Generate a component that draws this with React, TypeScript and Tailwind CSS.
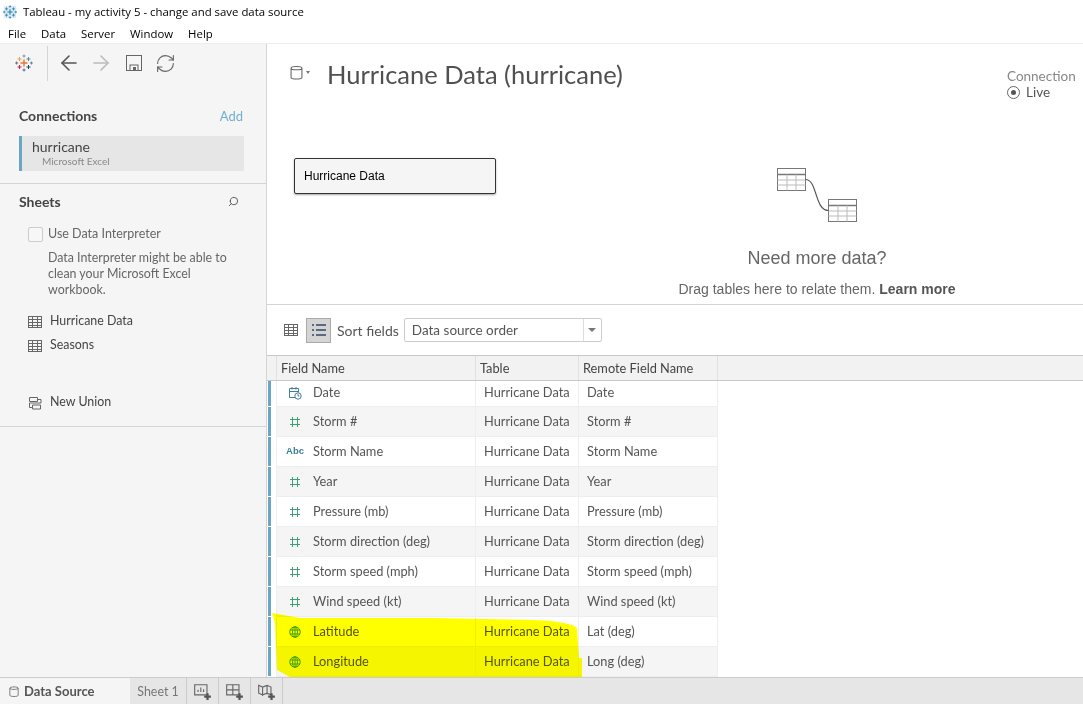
import { ArrowLeft, ArrowRight, RefreshCw, Search } from "lucide-react";

const font = "font-['Lato','Open_Sans',sans-serif]";

type FieldType = "date" | "num" | "abc" | "geo";

const fields: { name: string; remote: string; type: FieldType }[] = [
  { name: "Date", remote: "Date", type: "date" },
  { name: "Storm #", remote: "Storm #", type: "num" },
  { name: "Storm Name", remote: "Storm Name", type: "abc" },
  { name: "Year", remote: "Year", type: "num" },
  { name: "Pressure (mb)", remote: "Pressure (mb)", type: "num" },
  { name: "Storm direction (deg)", remote: "Storm direction (deg)", type: "num" },
  { name: "Storm speed (mph)", remote: "Storm speed (mph)", type: "num" },
  { name: "Wind speed (kt)", remote: "Wind speed (kt)", type: "num" },
  { name: "Latitude", remote: "Lat (deg)", type: "geo" },
  { name: "Longitude", remote: "Long (deg)", type: "geo" },
];

function TableLogo({ size = 14 }: { size?: number }) {
  return (
    <svg width={size} height={size} viewBox="0 0 14 14" fill="none" stroke="#666" strokeWidth="1">
      <rect x="0.5" y="1.5" width="13" height="11" />
      <path d="M0.5 4.5h13M0.5 7.5h13M0.5 10.5h13M4.5 1.5v11M9.5 1.5v11" />
    </svg>
  );
}

function Cross({ x, y, r, color, w = 1 }: { x: number; y: number; r: number; color: string; w?: number }) {
  return <path d={`M${x - r} ${y}h${r * 2}M${x} ${y - r}v${r * 2}`} stroke={color} strokeWidth={w} fill="none" />;
}

function TableauMark({ size, mono }: { size: number; mono?: boolean }) {
  const c = (v: string) => (mono ? "#2f7fa8" : v);
  return (
    <svg width={size} height={size} viewBox="0 0 18 18">
      {mono && <rect x="1" y="1" width="16" height="16" fill="#d9ecf5" />}
      <Cross x={9} y={9} r={3.5} color={c("#e8762b")} w={1.4} />
      <Cross x={4.5} y={5} r={2} color={c("#e8a33d")} />
      <Cross x={13.5} y={5} r={2} color={c("#5b879b")} />
      <Cross x={4.5} y={13} r={2} color={c("#c72037")} />
      <Cross x={13.5} y={13} r={2} color={c("#1f447b")} />
      <Cross x={9} y={2} r={1.5} color={c("#7099a6")} />
      <Cross x={9} y={16} r={1.5} color={c("#5c6692")} />
      <Cross x={1.6} y={9} r={1.5} color={c("#7b5f8e")} />
      <Cross x={16.4} y={9} r={1.5} color={c("#59879b")} />
    </svg>
  );
}

function Cylinder({ w, h }: { w: number; h: number }) {
  return (
    <svg width={w} height={h} viewBox="0 0 12 15" fill="none" stroke="#666" strokeWidth="1">
      <path d="M1 3.5C1 1.5 11 1.5 11 3.5V12C11 14 1 14 1 12ZM1 3.5C1 5.5 11 5.5 11 3.5" />
    </svg>
  );
}

function FieldIcon({ type }: { type: FieldType }) {
  if (type === "num")
    return (
      <svg width="12" height="12" viewBox="0 0 12 12" stroke="#3f9e78" strokeWidth="1" fill="none">
        <path d="M3.5 1v10M8.5 1v10M1 3.5h10M1 8.5h10" />
      </svg>
    );
  if (type === "abc") return <span className="text-[9.5px] font-bold text-[#3f7f9c] font-['Liberation_Sans',sans-serif]">Abc</span>;
  if (type === "geo")
    return (
      <svg width="12" height="12" viewBox="0 0 12 12" stroke="#43a01e" strokeWidth="1" fill="none">
        <circle cx="6" cy="6" r="5.2" />
        <ellipse cx="6" cy="6" rx="2.4" ry="5.2" />
        <path d="M0.8 4h10.4M0.8 8h10.4M6 0.8v10.4" />
      </svg>
    );
  return (
    <svg width="14" height="14" viewBox="0 0 14 14" stroke="#3f7f9c" strokeWidth="1" fill="none">
      <path d="M7 11.5H1.5V2.5h9v4M1.5 5.5h9M4 1v2.5M8 1v2.5" />
      <circle cx="10" cy="10" r="3.2" />
      <path d="M10 8.2V10h1.4" />
    </svg>
  );
}

function Sidebar() {
  return (
    <aside className="w-[267px] shrink-0 bg-[#f5f5f5] border-r border-[#d4d4d4] flex flex-col">
      <div className="flex items-center h-[38px] pl-[15px] text-[#666]">
        <TableauMark size={18} />
        <div className="w-px h-[35px] bg-[#d4d4d4] ml-[14px] mr-[9px]" />
        <ArrowLeft size={24} strokeWidth={1.6} color="#555" />
        <ArrowRight size={24} strokeWidth={1.6} color="#bbb" className="ml-[8px]" />
        <svg width="16" height="16" viewBox="0 0 16 16" fill="none" stroke="#666" className="ml-[13px]">
          <rect x="0.5" y="0.5" width="15" height="15" />
          <rect x="4" y="10" width="8" height="5.5" />
          <rect x="7" y="12" width="3" height="3.5" fill="#666" stroke="none" />
        </svg>
        <RefreshCw size={21} strokeWidth={1.3} color="#666" className="ml-[13px]" />
      </div>

      <div className="flex justify-between items-center pl-[19px] pr-[23px] mt-[24px] h-[18px]">
        <span className="text-[14px] font-bold text-[#444]">Connections</span>
        <span className="pt-[4px] text-[13px] text-[#6fb0cf]">Add</span>
      </div>
      <div className="ml-[19px] mr-[22px] mt-[12px] h-[35px] bg-[#e6e6e6] border-l-[3px] border-[#6ba5c4] pl-[10px] pt-[2px]">
        <div className="text-[14px] leading-[17px] text-[#444]">hurricane</div>
        <div className="text-[10px] leading-[12px] text-[#888] pl-[10px]">Microsoft Excel</div>
      </div>

      <div className="mt-[12px] border-t border-[#d4d4d4] pl-[19px] pr-[27px]">
        <div className="flex justify-between items-center mt-[8px] h-[18px]">
          <span className="text-[14px] font-bold text-[#444]">Sheets</span>
          <Search size={11} color="#555" className="-scale-x-100" />
        </div>
        <div className="flex items-center mt-[15px] ml-[9px] gap-[5px]">
          <span className="w-[15px] h-[15px] rounded-[2px] border border-[#ccc] bg-[#f7f7f7]" />
          <span className="text-[12.5px] text-[#666]">Use Data Interpreter</span>
        </div>
        <p className="ml-[29px] mt-[6px] text-[12.4px] leading-[16px] text-[#666]">
          Data Interpreter might be able to clean your Microsoft Excel workbook.
        </p>
        <div className="ml-[9px] mt-[12px] flex items-center gap-[8px] h-[24px] text-[12.4px] text-[#444]">
          <TableLogo />
          Hurricane Data
        </div>
        <div className="ml-[9px] flex items-center gap-[8px] h-[24px] text-[12.4px] text-[#444]">
          <TableLogo />
          Seasons
        </div>
        <div className="ml-[9px] mt-[33px] flex items-center gap-[8px] h-[24px] text-[12.4px] text-[#444]">
          <svg width="14" height="14" viewBox="0 0 14 14" fill="none" stroke="#666">
            <path d="M1.5 1.5h8v4h-8zM4.5 9h8v4h-8zM9.5 3.5H13V7H1.5v2M1.5 9v2.5H4.5" />
          </svg>
          New Union
        </div>
      </div>
      <div className="mt-[11px] border-t border-[#d4d4d4]" />
    </aside>
  );
}

function Canvas() {
  return (
    <section className="h-[261px] flex border-b border-[#d4d4d4] shrink-0">
      <div className="w-[394px] shrink-0">
        <div className="flex items-center pl-[23px] mt-[14px] h-[32px]">
          <span className="mb-[3px] flex items-center">
            <Cylinder w={13} h={17} />
            <span className="w-0 h-0 ml-[3px] border-x-[2.5px] border-x-transparent border-t-[3px] border-t-[#777]" />
          </span>
          <h1 className="ml-[17px] text-[25.5px] leading-[32px] text-[#505050]">Hurricane Data (hurricane)</h1>
        </div>
        <div className="ml-[27px] mt-[68px] w-[202px] h-[36px] bg-[#f5f5f5] border border-[#333] rounded-[2px] shadow-[0_1px_2px_rgba(0,0,0,0.35)] flex items-center pl-[9px] text-[12px] text-black font-['Liberation_Sans',sans-serif]">
          Hurricane Data
        </div>
      </div>

      <div className="w-[312px] shrink-0 flex flex-col items-center pt-[124px] font-['Liberation_Sans',sans-serif]">
        <svg width="82" height="56" viewBox="0 0 82 56" fill="none" stroke="#777" className="ml-[2px]">
          <rect x="0.5" y="0.5" width="28" height="22" fill="#fff" />
          <path d="M0.5 6.5h28" strokeWidth="1.5" />
          <path d="M0.5 12h28M0.5 17h28M10 6.5v16M19 6.5v16" stroke="#bbb" />
          <rect x="51.5" y="31.5" width="28" height="22" fill="#fff" />
          <path d="M51.5 37.5h28" strokeWidth="1.5" />
          <path d="M51.5 43h28M51.5 48h28M61 37.5v16M70 37.5v16" stroke="#bbb" />
          <path d="M28.5 11.5c12 0 9 31 23 31" stroke="#555" strokeWidth="1.2" />
        </svg>
        <div className="mt-[23px] text-[18px] leading-[22px] text-[#666]">Need more data?</div>
        <div className="mt-[11px] text-[14px] leading-[18px] text-[#666] whitespace-nowrap">
          Drag tables here to relate them. <b className="text-[#555]">Learn more</b>
        </div>
      </div>

      <div className="pl-[34px] pt-[24px]">
        <div className="text-[13.5px] leading-[16px] text-[#888]">Connection</div>
        <div className="flex items-center gap-[6px] text-[13.5px] leading-[17px] text-[#555]">
          <span className="w-[13px] h-[13px] rounded-full border border-[#666] flex items-center justify-center">
            <span className="w-[5px] h-[5px] rounded-full bg-[#555]" />
          </span>
          Live
        </div>
      </div>
    </section>
  );
}

function FieldTable() {
  return (
    <div className="relative flex-1 min-h-0 overflow-hidden border-t border-[#c8c8c8] bg-white text-[12.8px]">
      <div className="flex h-[25px] bg-[#f2f2f2] border-b border-[#c8c8c8] text-[#444]">
        <div className="w-[10px] border-r border-[#e0e0e0]" />
        <div className="w-[199px] border-r border-[#e0e0e0] pl-[4px] leading-[25px]">Field Name</div>
        <div className="w-[103px] border-r border-[#e0e0e0] pl-[4px] leading-[25px]">Table</div>
        <div className="w-[139px] border-r border-[#e0e0e0] pl-[4px] leading-[25px]">Remote Field Name</div>
      </div>
      {fields.map((f, i) => {
        // the first row is scrolled partly under the header
        const pad = i === 0 ? "pb-[2px]" : "";
        return (
          <div key={f.name} className={`w-[451px] flex text-[#555] ${i === 0 ? "h-[26px]" : "h-[30px]"} ${i % 2 ? "bg-[#f5f5f5]" : "bg-white"}`}>
            <div className="w-[10px] border-r border-[#eee] pb-px bg-white">
              <div className="ml-px w-[3px] h-full bg-[#6ba5c4]" />
            </div>
            <div className={`w-[199px] border-r border-b border-[#eee] flex items-center ${pad}`}>
              <span className="w-[36px] flex justify-center">
                <FieldIcon type={f.type} />
              </span>
              {f.name}
            </div>
            <div className={`w-[103px] border-r border-b border-[#eee] flex items-center pl-[8px] whitespace-nowrap ${pad}`}>Hurricane Data</div>
            <div className={`w-[139px] border-r border-b border-[#eee] flex items-center pl-[8px] whitespace-nowrap ${pad}`}>{f.remote}</div>
          </div>
        );
      })}

      {/* marker scribble over the last two rows */}
      <svg width="330" height="70" viewBox="0 0 330 70" className="absolute left-[3px] top-[257px] mix-blend-multiply pointer-events-none">
        <path d="M2 0L30 5L164 5L264 7C290 8 303 11 307 15L309 45L312 45L312 66L190 66L134 65L67 65L20 64L7 57L5 10Z" fill="#ffff00" />
      </svg>
    </div>
  );
}

export default function App() {
  return (
    <div className={`w-[1083px] h-[704px] overflow-hidden flex flex-col bg-white text-[#444] ${font}`}>
      <div className="h-[24px] shrink-0 flex items-center pl-[3px] gap-[6px] text-[11.4px] text-black font-['Open_Sans',sans-serif]">
        <TableauMark size={14} mono />
        Tableau - my activity 5 - change and save data source
      </div>
      <div className="h-[20px] shrink-0 flex items-center pl-[8px] gap-[15px] text-[11.4px] text-black font-['Open_Sans',sans-serif] border-b border-[#eee]">
        <span>File</span>
        <span>Data</span>
        <span>Server</span>
        <span>Window</span>
        <span>Help</span>
      </div>

      <div className="flex-1 min-h-0 flex">
        <Sidebar />
        <main className="flex-1 min-w-0 flex flex-col">
          <Canvas />
          <div className="h-[50px] shrink-0 flex items-center pl-[17px]">
            <TableLogo />
            <span className="ml-[8px] w-[25px] h-[25px] bg-[#d4d4d4] border border-[#aaa] flex items-center justify-center">
              <svg width="14" height="12" viewBox="0 0 14 12" stroke="#5a6a80" strokeWidth="2">
                <path d="M0 1h2M4 1h10M0 6h2M4 6h10M0 11h2M4 11h10" />
              </svg>
            </span>
            <span className="ml-[6px] text-[14px] text-[#555]">Sort fields</span>
            <div className="ml-[5px] w-[198px] h-[24px] border border-[#ccc] rounded-[2px] flex items-center text-[13.5px] text-[#555]">
              <span className="flex-1 pl-[7px]">Data source order</span>
              <span className="w-[18px] h-full border-l border-[#ddd] flex items-center justify-center">
                <span className="w-0 h-0 border-x-[4px] border-x-transparent border-t-[4px] border-t-[#777]" />
              </span>
            </div>
          </div>
          <FieldTable />
        </main>
      </div>

      <footer className="h-[27px] shrink-0 flex bg-[#e6e6e6] border-t border-[#ccc] text-[13px]">
        <div className="w-[130px] bg-[#f5f5f5] flex items-center pl-[9px] pt-px gap-[5px] font-bold text-[#555]">
          <Cylinder w={10} h={13} />
          Data Source
        </div>
        <div className="w-[57px] border-r border-[#ccc] flex items-center justify-center pt-[2px] text-[12.4px] text-[#777]">Sheet 1</div>
        {[0, 1, 2].map((k) => (
          <div key={k} className="w-[32px] border-r border-[#ccc] flex items-center justify-center">
            <svg width="19" height="19" viewBox="0 0 17 17" fill="none" stroke="#666">
              {k === 0 && <path d="M1.5 2.5h11v9h-11zM4.5 9V7M7 9V5M9.5 9V6.5" />}
              {k === 1 && <path d="M1.5 2.5h11v9h-11zM7 2.5v9M1.5 7h11" />}
              {k === 2 && <path d="M1.5 3l3.5 1.5 4-1.5 3.5 1.5v7l-3.5-1.5-4 1.5-3.5-1.5zM5 4.5v8M9 3v8" />}
              <path d="M13 10v6M10 13h6" strokeWidth="2" stroke="#555" />
            </svg>
          </div>
        ))}
      </footer>
    </div>
  );
}
